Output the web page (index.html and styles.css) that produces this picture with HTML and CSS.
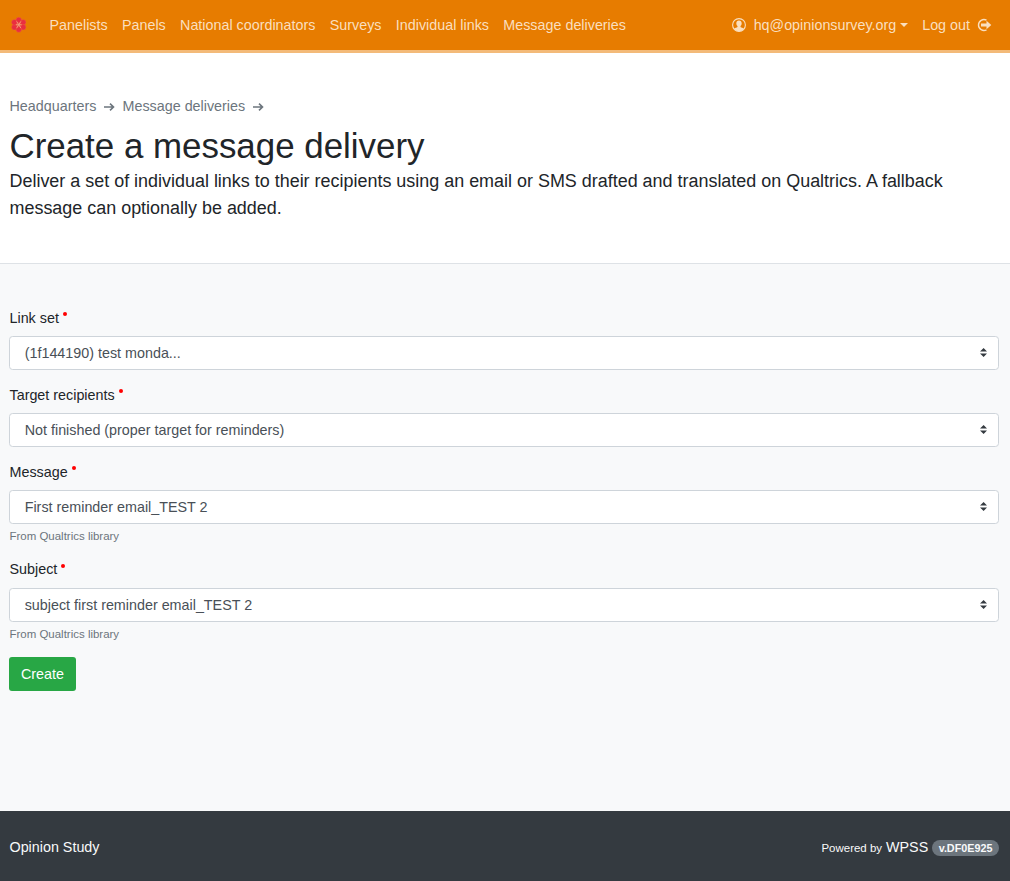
FILE: index.html
```html
<!DOCTYPE html>
<html lang="en">
<head>
<meta charset="utf-8">
<title>Create a message delivery</title>
<link rel="stylesheet" href="styles.css">
</head>
<body>
<nav class="navbar">
  <a class="brand" href="#" aria-label="Home">
    <svg class="flower" viewBox="0 0 16 16">
      <circle cx="8" cy="8" r="4" fill="#ea4a3c"/>
      <g fill="#e92e40" stroke="#ef6b3c" stroke-width=".4">
        <circle cx="8" cy="3.200" r="2.900"/><circle cx="12.500" cy="5.500" r="2.900"/><circle cx="12.500" cy="10.500" r="2.900"/>
        <circle cx="8" cy="12.800" r="2.900"/><circle cx="3.500" cy="10.500" r="2.900"/><circle cx="3.500" cy="5.500" r="2.900"/>
      </g>
      <path d="M8 8L5.800 4.500M8 8l2.200-3.500M8 8l2.200 3.500M8 8l-2.200 3.500M5 8h6" stroke="#f3a080" stroke-width=".9"/>
    </svg>
  </a>
  <div class="links">
    <a href="#">Panelists</a><a href="#">Panels</a><a href="#">National coordinators</a><a href="#">Surveys</a><a href="#">Individual links</a><a href="#">Message deliveries</a>
  </div>
  <div class="account">
    <a class="user" href="#">
      <svg class="icon" viewBox="0 0 14 14"><circle cx="7" cy="7" r="6.400" fill="none" stroke="currentColor" stroke-width="1.100"/><path d="M7 2.500c1.700 0 2.700 1.100 2.700 2.800 0 1.200-.5 2.200-1.200 2.800v1c.8.6 2.600.8 3.500 1.700A6.200 6.200 0 0 1 7 13.300a6.200 6.200 0 0 1-5-2.500c.9-.9 2.700-1.100 3.500-1.700v-1c-.7-.6-1.200-1.600-1.200-2.800C4.300 3.600 5.300 2.500 7 2.500z" fill="currentColor"/></svg>
      <span>hq@opinionsurvey.org</span><i class="caret"></i>
    </a>
    <a class="logout" href="#"><span>Log out</span>
      <svg class="icon" viewBox="0 0 14 14"><path d="M9.500 2.100A5.500 5.500 0 1 0 9.500 11.900" fill="none" stroke="currentColor" stroke-width="1.400"/><path d="M4 5.400H9.500V2.800L14.300 7 9.500 11.200V8.600H4z" fill="currentColor"/></svg>
    </a>
  </div>
</nav>
<header class="page-head">
  <div class="crumbs">
    <a href="#">Headquarters</a><svg class="arrow" viewBox="0 0 11 10"><path d="M0 5h9.500M6 1.700L9.500 5 6 8.300" fill="none" stroke="currentColor" stroke-width="1.600"/></svg><a href="#">Message deliveries</a><svg class="arrow" viewBox="0 0 11 10"><path d="M0 5h9.500M6 1.700L9.500 5 6 8.300" fill="none" stroke="currentColor" stroke-width="1.600"/></svg>
  </div>
  <h1>Create a message delivery</h1>
  <p class="lead">Deliver a set of individual links to their recipients using an email or SMS drafted and translated on Qualtrics. A fallback message can optionally be added.</p>
</header>
<main class="content">
  <form>
    <div class="group">
      <label>Link set<i class="required"></i></label>
      <div class="select"><span>(1f144190) test monda...</span><svg class="sort" viewBox="0 0 4 5"><path fill="#343a40" d="M2 0L0 2h4zm0 5L0 3h4z"/></svg></div>
    </div>
    <div class="group">
      <label>Target recipients<i class="required"></i></label>
      <div class="select"><span>Not finished (proper target for reminders)</span><svg class="sort" viewBox="0 0 4 5"><path fill="#343a40" d="M2 0L0 2h4zm0 5L0 3h4z"/></svg></div>
    </div>
    <div class="group">
      <label>Message<i class="required"></i></label>
      <div class="select"><span>First reminder email_TEST 2</span><svg class="sort" viewBox="0 0 4 5"><path fill="#343a40" d="M2 0L0 2h4zm0 5L0 3h4z"/></svg></div>
      <small>From Qualtrics library</small>
    </div>
    <div class="group">
      <label class="tight">Subject<i class="required"></i></label>
      <div class="select"><span>subject first reminder email_TEST 2</span><svg class="sort" viewBox="0 0 4 5"><path fill="#343a40" d="M2 0L0 2h4zm0 5L0 3h4z"/></svg></div>
      <small>From Qualtrics library</small>
    </div>
    <button class="create" type="button">Create</button>
  </form>
</main>
<footer class="footer">
  <span>Opinion Study</span>
  <div class="powered"><small>Powered by</small> WPSS <span class="badge">v.DF0E925</span></div>
</footer>
</body>
</html>
```
FILE: styles.css
```css
* { box-sizing: border-box; }
body {
  margin: 0;
  min-height: 881px;
  display: flex;
  flex-direction: column;
  font: 14.340px/21.600px "Liberation Sans", Arial, sans-serif;
  color: #212529;
  background: #f8f9fa;
}
a { color: inherit; text-decoration: none; }
.navbar {
  height: 53px;
  padding: 0 19px 0 11px;
  display: flex;
  align-items: center;
  background: #e77c00;
  border-bottom: 3px solid #f3ba79;
  color: #fadfbf;
}
.brand { width: 38.500px; display: flex; }
.flower { width: 15.500px; height: 15.500px; }
.links { display: flex; gap: 14.300px; padding-top: 2px; }
.account { margin-left: auto; display: flex; gap: 14px; }
.user, .logout { display: flex; align-items: center; }
.user span, .logout span { padding-top: 2px; }
.icon { width: 14px; height: 14px; overflow: visible; }
.user .icon { margin-right: 7.500px; }
.logout .icon { margin-left: 7px; }
.caret {
  margin-left: 4px;
  border: 4.300px solid transparent;
  border-top-color: currentColor;
  border-bottom: 0;
}
.page-head {
  height: 211px;
  padding: 43px 11px 0 9.500px;
  background: #fff;
  border-bottom: 1px solid #dee2e6;
}
.crumbs { display: flex; align-items: center; color: #6c757d; }
.arrow { width: 11px; height: 10px; margin: 0 7.500px 0 7.700px; }
h1 { margin: 6px 0 1px; font-size: 34.900px; font-weight: 500; line-height: 43px; }
.lead { margin: 0; font-size: 17.950px; line-height: 27px; }
.content { flex: 1; padding: 43px 11px 0 9px; }
.group { margin-bottom: 14px; }
label { display: flex; height: 21px; margin-bottom: 8px; padding: 1px 0 0 .500px; }
label.tight { padding-top: 0; }
.tight .required { margin-top: 5px; }
.required {
  width: 4px;
  height: 4px;
  margin: 4px 0 0 4px;
  border-radius: 50%;
  background: #f00;
}
.select {
  height: 34px;
  padding: 0 11px 0 14.700px;
  display: flex;
  align-items: center;
  justify-content: space-between;
  background: #fff;
  border: 1px solid #ced4da;
  border-radius: 3.600px;
  color: #495057;
}
.select span { padding-top: 2px; }
.sort { width: 7.200px; height: 9px; margin-bottom: 1px; }
.group small {
  display: block;
  margin-top: 4px;
  padding-left: .500px;
  font-size: 11.480px;
  line-height: 17px;
  color: #6c757d;
}
.create {
  width: 67px;
  height: 34px;
  padding: 2px 0 0;
  border: 0;
  border-radius: 3px;
  font: inherit;
  color: #fff;
  background: #28a745;
}
.footer {
  height: 70px;
  padding: 4px 11px 0 9.500px;
  display: flex;
  align-items: center;
  justify-content: space-between;
  background: #343a40;
  color: #f8f9fa;
}
.powered small { font-size: 11.480px; }
.badge {
  display: inline-block;
  padding: 2.700px 6.500px;
  border-radius: 10px;
  font-size: 10.800px;
  font-weight: 700;
  line-height: 10.800px;
  background: #6c757d;
}
```
